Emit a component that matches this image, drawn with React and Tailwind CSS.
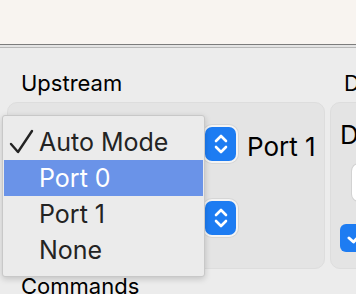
import React from "react";

function Stepper() {
  return (
    <div className="w-[35px] h-[38px] rounded-[9px] bg-[#f4f4f4] p-[2px] shadow-[0_0_0_1px_rgba(0,0,0,0.06)]">
      <div className="w-full h-full rounded-[7px] bg-[#1d7cf2] flex items-center justify-center">
        <svg width="16" height="26" viewBox="0 0 16 26" fill="none" stroke="white" strokeWidth="2.6" strokeLinecap="round" strokeLinejoin="round">
          <path d="M3 10 L8 5 L13 10" />
          <path d="M3 16 L8 21 L13 16" />
        </svg>
      </div>
    </div>
  );
}

function PopupRow({ label }) {
  return (
    <div className="flex items-center h-[38px]">
      <div className="w-[230px] h-[38px] flex justify-end">
        <Stepper />
      </div>
      {label && <span className="ml-[9px] mt-[6px] text-[26px] leading-none text-black">{label}</span>}
    </div>
  );
}

export default function App() {
  const items = ["Auto Mode", "Port 0", "Port 1", "None"];
  return (
    <div className="relative w-[356px] h-[294px] overflow-hidden bg-[#ececec] font-['Inter',sans-serif] text-[#1f1f1f]">
      <div className="h-[44px] bg-[#f8f4f0]" />
      <div className="h-px bg-[#7c7c7c]" />
      <div className="h-[2px] bg-[#e4e4e4]" />
      <div className="h-px bg-[#b8b8b8]" />

      <div className="flex gap-[5px] pl-[7px] pt-[22px]">
        <div className="flex flex-col w-[318px] shrink-0">
          <div className="pl-[14px] text-[22px] leading-[26px] text-black">Upstream</div>
          <div className="mt-[6px] h-[167px] rounded-[10px] bg-[#e4e4e4] border border-[#dddddd] flex flex-col pt-[22px] gap-[36px]">
            <PopupRow label="Port 1" />
            <PopupRow />
          </div>
          <div className="pl-[14px] mt-[4px] text-[22px] leading-[26px] text-black">Commands</div>
        </div>
        <div className="flex flex-col w-[60px] shrink-0">
          <div className="pl-[14px] text-[22px] leading-[26px] text-black">D</div>
          <div className="mt-[6px] h-[167px] rounded-[10px] bg-[#e4e4e4] border border-[#dddddd] pl-[9px] pt-[17px]">
            <div className="text-[26px] leading-[30px] text-black">D</div>
            <div className="mt-[14px] ml-[12px] h-[37px] rounded-l-[7px] bg-white shadow-[0_0_0_1px_rgba(0,0,0,0.08)]" />
            <div className="mt-[23px] w-[30px] h-[28px] rounded-[6px] bg-[#1d7cf2] flex items-center justify-center">
              <svg width="18" height="14" viewBox="0 0 18 14" fill="none" stroke="white" strokeWidth="3" strokeLinecap="round" strokeLinejoin="round">
                <path d="M3 7 L7.5 11 L15 3" />
              </svg>
            </div>
          </div>
        </div>
      </div>

      <div className="absolute left-[2px] top-[115px] w-[203px] h-[162px] bg-[#ebebeb] border border-[#c8c8c8] rounded-[3px] shadow-[0_2px_6px_rgba(0,0,0,0.18)] py-[8px] px-px">
        {items.map((item, i) => (
          <div
            key={item}
            className={`h-[36px] flex items-center text-[25px] leading-none ${i === 1 ? "bg-[#6a93e8] text-white" : "text-[#232323]"}`}
          >
            <span className="w-[35px] flex justify-center">
              {i === 0 && (
                <svg width="26" height="26" viewBox="0 0 26 26" fill="none" stroke="#232323" strokeWidth="2.4" strokeLinecap="round" strokeLinejoin="round">
                  <path d="M2 15 L9 23 L23 2" />
                </svg>
              )}
            </span>
            <span>{item}</span>
          </div>
        ))}
      </div>
    </div>
  );
}
